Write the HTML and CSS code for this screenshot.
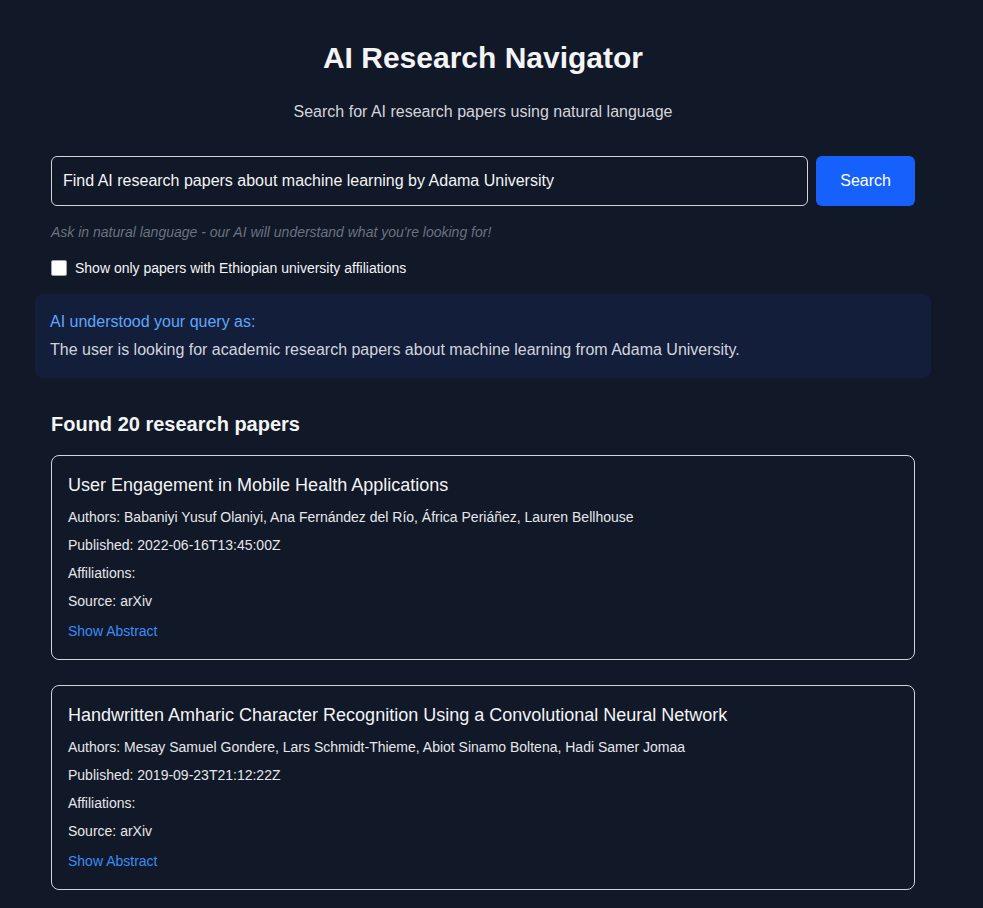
FILE: index.html
```html
<!DOCTYPE html>
<html lang="en">
<head>
<meta charset="utf-8">
<title>AI Research Navigator</title>
<link rel="stylesheet" href="styles.css">
</head>
<body>
<main class="container">
  <h1 class="title">AI Research Navigator</h1>
  <p class="subtitle">Search for AI research papers using natural language</p>

  <div class="search-area">
    <form class="search-row">
      <input class="search-input" type="text" value="Find AI research papers about machine learning by Adama University">
      <button class="search-btn" type="button">Search</button>
    </form>
    <p class="hint">Ask in natural language - our AI will understand what you're looking for!</p>
    <label class="filter">
      <span class="checkbox"></span>
      <span>Show only papers with Ethiopian university affiliations</span>
    </label>
  </div>

  <section class="understood">
    <h3 class="understood-label">AI understood your query as:</h3>
    <p class="understood-text">The user is looking for academic research papers about machine learning from Adama University.</p>
  </section>

  <section class="results">
    <h2 class="results-title">Found 20 research papers</h2>

    <article class="card">
      <h3 class="card-title">User Engagement in Mobile Health Applications</h3>
      <p class="meta">Authors: Babaniyi Yusuf Olaniyi, Ana Fernández del Río, África Periáñez, Lauren Bellhouse</p>
      <p class="meta">Published: 2022-06-16T13:45:00Z</p>
      <p class="meta">Affiliations: </p>
      <p class="meta">Source: arXiv</p>
      <button class="abstract-btn" type="button">Show Abstract</button>
    </article>

    <article class="card">
      <h3 class="card-title">Handwritten Amharic Character Recognition Using a Convolutional Neural Network</h3>
      <p class="meta">Authors: Mesay Samuel Gondere, Lars Schmidt-Thieme, Abiot Sinamo Boltena, Hadi Samer Jomaa</p>
      <p class="meta">Published: 2019-09-23T21:12:22Z</p>
      <p class="meta">Affiliations: </p>
      <p class="meta">Source: arXiv</p>
      <button class="abstract-btn" type="button">Show Abstract</button>
    </article>
  </section>
</main>
</body>
</html>
```
FILE: styles.css
```css
* { box-sizing: border-box; }

html, body {
  margin: 0;
  background: #111827;
}

body {
  font-family: "Liberation Sans", Arial, sans-serif;
  color: #e5e7eb;
  padding-right: 17px;
}

.container {
  max-width: 896px;
  margin: 0 auto;
  padding: 40px 0 16px;
}

.title {
  margin: 0 0 24px;
  font-size: 30px;
  line-height: 36px;
  font-weight: 700;
  text-align: center;
  color: #f3f4f6;
}

.subtitle {
  margin: 0 0 32px;
  font-size: 16px;
  line-height: 24px;
  text-align: center;
  color: #d1d5db;
}

.search-area {
  padding: 0 16px;
}

.search-row {
  display: flex;
  gap: 8px;
  margin: 0;
}

.search-input {
  flex: 1;
  height: 50px;
  padding: 12px 11px;
  border: 1px solid #d1d5db;
  border-radius: 6px;
  background: #111827;
  color: #f3f4f6;
  font-family: inherit;
  font-size: 16px;
  line-height: 24px;
  outline: none;
}

.search-btn {
  height: 50px;
  padding: 0 24px;
  border: 0;
  border-radius: 6px;
  background: #1661fc;
  color: #ffffff;
  font-family: inherit;
  font-size: 16px;
  line-height: 24px;
}

.hint {
  margin: 16px 0 0;
  font-size: 14px;
  line-height: 20px;
  font-style: italic;
  color: #6b7280;
}

.filter {
  display: flex;
  align-items: center;
  gap: 8px;
  margin-top: 16px;
  height: 20px;
  font-size: 14px;
  line-height: 20px;
  color: #f3f4f6;
}

.checkbox {
  width: 16px;
  height: 16px;
  border-radius: 2px;
  background: #ffffff;
  border: 1px solid #9ca3af;
}

.understood {
  margin-top: 16px;
  padding: 16px 15px;
  border-radius: 8px;
  background: #131e3b;
}

.understood-label {
  margin: 0 0 4px;
  font-size: 16px;
  line-height: 24px;
  font-weight: 400;
  color: #60a5fa;
}

.understood-text {
  margin: 0;
  font-size: 16px;
  line-height: 24px;
  color: #d1d5db;
}

.results {
  padding: 0 16px;
  margin-top: 32px;
}

.results-title {
  margin: 0 0 17px;
  font-size: 20px;
  line-height: 28px;
  font-weight: 700;
  color: #f3f4f6;
}

.card {
  border: 1px solid #d1d5db;
  border-radius: 8px;
  padding: 15px 16px 18px;
  margin-bottom: 25px;
}

.card-title {
  margin: 0;
  font-size: 18px;
  line-height: 28px;
  font-weight: 400;
  color: #f3f4f6;
}

.meta {
  margin: 8px 0 0;
  font-size: 14px;
  line-height: 20px;
  color: #e5e7eb;
}

.abstract-btn {
  display: block;
  margin-top: 10px;
  padding: 0;
  border: 0;
  background: none;
  font-family: inherit;
  font-size: 14px;
  line-height: 20px;
  color: #3b8cf6;
}
```
